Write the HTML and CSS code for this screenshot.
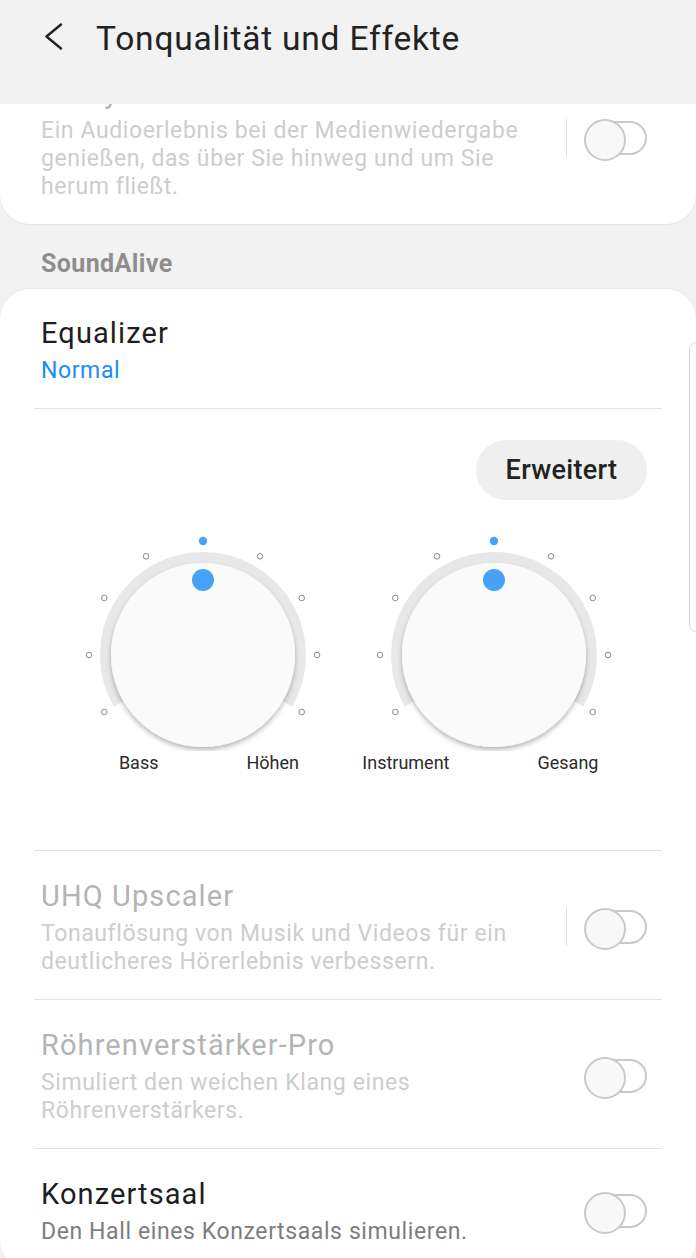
FILE: index.html
```html
<!DOCTYPE html>
<html lang="de">
<head>
    <meta charset="UTF-8">
    <meta name="viewport" content="width=device-width, initial-scale=1.0">
    <title>Tonqualität und Effekte</title>
    <link rel="stylesheet" href="styles.css">
</head>
<body>
    <header class="toolbar">
        <svg class="back" width="20" height="28" viewBox="0 0 20 28">
            <path d="M18 1.5 L3.5 13.5 L18 25.5" fill="none" stroke="#222" stroke-width="2.4" stroke-linecap="round" stroke-linejoin="round"/>
        </svg>
        <h1>Tonqualität und Effekte</h1>
    </header>

    <main class="scroll">
        <section class="card card-top">
            <div class="row disabled">
                <div class="text">
                    <div class="title">Dolby Atmos</div>
                    <div class="desc">Ein Audioerlebnis bei der Medienwiedergabe genießen, das über Sie hinweg und um Sie herum fließt.</div>
                </div>
                <div class="control">
                    <span class="vline"></span>
                    <span class="switch"></span>
                </div>
            </div>
        </section>

        <div class="group-label">SoundAlive</div>

        <section class="card card-bottom">
            <div class="row first">
                <div class="text">
                    <div class="title">Equalizer</div>
                    <div class="desc blue">Normal</div>
                </div>
            </div>

            <div class="eq">
                <div class="eq-actions">
                    <button class="pill">Erweitert</button>
                </div>
                <div class="knobs">
                    <div class="knob">
                        <svg width="240" height="221" viewBox="0 0 240 221">
                            <defs>
                                <filter id="sh1" x="-20%" y="-20%" width="140%" height="140%">
                                    <feDropShadow dx="0" dy="3" stdDeviation="2.5" flood-color="#000" flood-opacity="0.28"/>
                                </filter>
                            </defs>
                            <path d="M35.56 173.75 A97.5 97.5 0 1 1 204.44 173.75" fill="none" stroke="#e8e8e8" stroke-width="11"/>
                            <circle cx="120" cy="125" r="92" fill="#fafafa" filter="url(#sh1)"/>
                            <circle cx="120" cy="50" r="11" fill="#47a2f6"/>
                            <g fill="#fff" stroke="#8a8a8a" stroke-width="1">
                                <circle cx="21.3" cy="182" r="2.8"/>
                                <circle cx="6" cy="125" r="2.8"/>
                                <circle cx="21.3" cy="68" r="2.8"/>
                                <circle cx="63" cy="26.3" r="2.8"/>
                                <circle cx="177" cy="26.3" r="2.8"/>
                                <circle cx="218.7" cy="68" r="2.8"/>
                                <circle cx="234" cy="125" r="2.8"/>
                                <circle cx="218.7" cy="182" r="2.8"/>
                            </g>
                            <circle cx="120" cy="11" r="4.2" fill="#47a2f6"/>
                        </svg>
                        <div class="knob-labels">
                            <span class="lbl-left">Bass</span>
                            <span class="lbl-right">Höhen</span>
                        </div>
                    </div>
                    <div class="knob">
                        <svg width="240" height="221" viewBox="0 0 240 221">
                            <defs>
                                <filter id="sh2" x="-20%" y="-20%" width="140%" height="140%">
                                    <feDropShadow dx="0" dy="3" stdDeviation="2.5" flood-color="#000" flood-opacity="0.28"/>
                                </filter>
                            </defs>
                            <path d="M35.56 173.75 A97.5 97.5 0 1 1 204.44 173.75" fill="none" stroke="#e8e8e8" stroke-width="11"/>
                            <circle cx="120" cy="125" r="92" fill="#fafafa" filter="url(#sh2)"/>
                            <circle cx="120" cy="50" r="11" fill="#47a2f6"/>
                            <g fill="#fff" stroke="#8a8a8a" stroke-width="1">
                                <circle cx="21.3" cy="182" r="2.8"/>
                                <circle cx="6" cy="125" r="2.8"/>
                                <circle cx="21.3" cy="68" r="2.8"/>
                                <circle cx="63" cy="26.3" r="2.8"/>
                                <circle cx="177" cy="26.3" r="2.8"/>
                                <circle cx="218.7" cy="68" r="2.8"/>
                                <circle cx="234" cy="125" r="2.8"/>
                                <circle cx="218.7" cy="182" r="2.8"/>
                            </g>
                            <circle cx="120" cy="11" r="4.2" fill="#47a2f6"/>
                        </svg>
                        <div class="knob-labels">
                            <span class="lbl-left">Instrument</span>
                            <span class="lbl-right">Gesang</span>
                        </div>
                    </div>
                </div>
            </div>

            <div class="row disabled">
                <div class="text">
                    <div class="title">UHQ Upscaler</div>
                    <div class="desc">Tonauflösung von Musik und Videos für ein deutlicheres Hörerlebnis verbessern.</div>
                </div>
                <div class="control">
                    <span class="vline"></span>
                    <span class="switch"></span>
                </div>
            </div>

            <div class="row disabled">
                <div class="text">
                    <div class="title">Röhrenverstärker-Pro</div>
                    <div class="desc">Simuliert den weichen Klang eines Röhrenverstärkers.</div>
                </div>
                <div class="control">
                    <span class="switch"></span>
                </div>
            </div>

            <div class="row last">
                <div class="text">
                    <div class="title">Konzertsaal</div>
                    <div class="desc">Den Hall eines Konzertsaals simulieren.</div>
                </div>
                <div class="control">
                    <span class="switch"></span>
                </div>
            </div>
        </section>

        <div class="scroll-thumb"></div>
    </main>
</body>
</html>
```

FILE: styles.css
```css
* { box-sizing: border-box; }
html, body {
    margin: 0;
    padding: 0;
    height: 100%;
}
body {
    font-family: 'Roboto', 'Noto Sans', sans-serif;
    background: #f2f2f2;
    color: #222;
    overflow: hidden;
}
.toolbar {
    height: 104px;
    display: flex;
    align-items: flex-start;
    padding: 19px 0 0 43px;
}
.toolbar .back {
    margin-top: 4px;
}
.toolbar h1 {
    margin: 3px 0 0 33px;
    font-size: 33.5px;
    font-weight: 400;
    line-height: 34px;
    letter-spacing: 0.8px;
    color: #222;
}
.scroll {
    position: relative;
    height: 1154px;
    overflow: hidden;
}
.card {
    background: #fff;
    padding: 0 34px;
}
.card-top {
    margin-top: -45px;
    border-radius: 0 0 30px 30px;
    box-shadow: 0 1px 1px rgba(0, 0, 0, 0.06);
}
.card-bottom {
    border-radius: 30px;
    box-shadow: 0 -1px 1px rgba(0, 0, 0, 0.05);
    min-height: 975px;
}
.group-label {
    padding: 26px 41px 0;
    height: 65px;
    font-size: 25px;
    font-weight: 700;
    letter-spacing: 0.4px;
    color: #8e8e8e;
    line-height: 28px;
}
.row {
    display: flex;
    align-items: center;
    padding: 27px 15px 23px 7px;
    border-top: 1px solid #e3e3e3;
}
.card-top .row {
    border-top: none;
    padding-top: 16px;
    padding-bottom: 23px;
}
.row.first {
    border-top: none;
    padding-top: 26px;
    padding-bottom: 23px;
}
.row.last {
    padding-top: 27px;
}
.text {
    flex: 1;
    padding-right: 20px;
}
.title {
    font-size: 29px;
    line-height: 36px;
    letter-spacing: 1.1px;
    color: #1e1e1e;
}
.desc {
    margin-top: 6px;
    font-size: 23px;
    line-height: 28px;
    letter-spacing: 0.6px;
    color: #7d7d7d;
}
.desc.blue {
    color: #1b8df2;
}
.disabled .title {
    color: #b4b4b4;
}
.disabled .desc {
    color: #cdcdcd;
}
.control {
    display: flex;
    align-items: center;
    gap: 17px;
}
.vline {
    width: 1px;
    height: 38px;
    background: #dedede;
}
.switch {
    position: relative;
    width: 63px;
    height: 38px;
    display: block;
}
.switch::before {
    content: '';
    position: absolute;
    left: 14px;
    right: 0;
    top: 2px;
    bottom: 2px;
    border: 2px solid #c9c9c9;
    border-radius: 17px;
    background: #fff;
}
.switch::after {
    content: '';
    position: absolute;
    left: 0;
    top: 0;
    width: 38px;
    height: 38px;
    border: 2px solid #c9c9c9;
    border-radius: 50%;
    background: #f8f8f8;
}
.eq {
    border-top: 1px solid #e3e3e3;
    padding: 31px 0 75px;
}
.eq-actions {
    display: flex;
    justify-content: flex-end;
    padding-right: 15px;
}
.pill {
    width: 171px;
    height: 60px;
    border: none;
    border-radius: 30px;
    background: #efefef;
    font-family: inherit;
    font-size: 27px;
    font-weight: 500;
    letter-spacing: 0.3px;
    color: #222;
    padding: 0;
}
.knobs {
    display: flex;
    justify-content: center;
    gap: 51px;
    margin: 30px -34px 0;
}
.knob {
    width: 240px;
}
.knob svg {
    display: block;
}
.knob-labels {
    display: grid;
    grid-template-columns: 120px 120px;
    font-size: 18px;
    line-height: 24px;
    color: #2a2a2a;
}
.lbl-left {
    display: flex;
    justify-content: flex-end;
    padding-right: 44px;
    white-space: nowrap;
}
.lbl-right {
    display: flex;
    justify-content: flex-start;
    padding-left: 44px;
    white-space: nowrap;
}
.scroll-thumb {
    position: absolute;
    top: 238px;
    left: 689px;
    width: 14px;
    height: 290px;
    border: 1px solid #dcdcdc;
    border-radius: 7px;
    background: #fff;
}
```
